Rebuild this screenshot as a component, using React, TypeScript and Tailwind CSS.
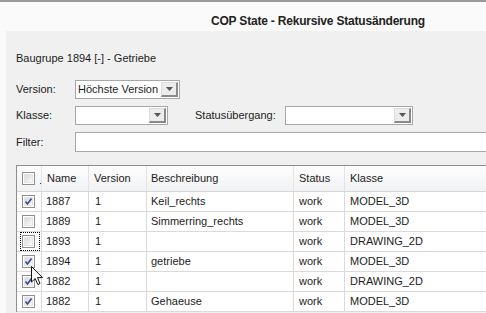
import React from 'react';

const rows = [
  { checked: true, name: '1887', version: '1', desc: 'Keil_rechts', status: 'work', klasse: 'MODEL_3D' },
  { checked: false, name: '1889', version: '1', desc: 'Simmerring_rechts', status: 'work', klasse: 'MODEL_3D' },
  { checked: false, name: '1893', version: '1', desc: '', status: 'work', klasse: 'DRAWING_2D', focus: true },
  { checked: true, name: '1894', version: '1', desc: 'getriebe', status: 'work', klasse: 'MODEL_3D' },
  { checked: true, name: '1882', version: '1', desc: '', status: 'work', klasse: 'DRAWING_2D' },
  { checked: true, name: '1882', version: '1', desc: 'Gehaeuse', status: 'work', klasse: 'MODEL_3D' },
];

function Checkbox({ checked }: { checked: boolean }) {
  return (
    <div className="relative w-[13px] h-[13px] border border-[#8f8f8f] bg-white p-[1px]">
      <div className="w-full h-full bg-gradient-to-br from-[#d8d8d8] to-[#fbfbfb] border border-[#e6e6e6]" />
      {checked && (
        <svg className="absolute left-0 top-0" width="11" height="11" viewBox="0 0 11 11">
          <path d="M2.5 5.5 L4.5 8 L8.5 2.5" fill="none" stroke="#2d4a9e" strokeWidth="1.6" />
        </svg>
      )}
    </div>
  );
}

function DropButton() {
  return (
    <div className="w-[17px] h-full flex items-center justify-center bg-[#ececec] border-l border-t border-l-[#dcdcdc] border-t-[#dcdcdc] border-r-2 border-b-2 border-r-[#8a8a8a] border-b-[#8a8a8a]">
      <svg width="7" height="4" viewBox="0 0 7 4">
        <path d="M0 0 H7 L3.5 4 Z" fill="#555" />
      </svg>
    </div>
  );
}

function Select({ width, value }: { width: string; value?: string }) {
  return (
    <div className={`flex shrink-0 h-full bg-white border border-[#a8a8a8] p-[1px] ${width}`}>
      <div className="flex-1 flex items-center pl-[1px] leading-none">{value}</div>
      <DropButton />
    </div>
  );
}

export default function App() {
  return (
    <div className="relative w-[486px] h-[313px] overflow-hidden bg-[#fafafa] text-[11px] text-[#1c1c1c] font-['Liberation_Sans',Arial,sans-serif]">
      <div className="h-[2px] bg-[#9a9a9a]" />
      {/* Title bar */}
      <div className="h-[29px] pl-[211px] pt-[11px]">
        <span className="text-[12px] leading-[14px] font-bold tracking-[-0.2px] text-[#222]">COP State - Rekursive Statusänderung</span>
      </div>

      <div className="flex h-[282px]">
        <div className="w-[6px] shrink-0" />
        <div className="flex-1 min-w-0 bg-[#f0f0f0] pl-[10px] pt-[21px]">
          <div className="leading-[13px]">Baugrupe 1894 [-] - Getriebe</div>

          <div className="mt-[15px] flex flex-col gap-[7px]">
            <div className="flex items-center h-[19px]">
              <div className="w-[59px] shrink-0">Version:</div>
              <Select width="w-[105px]" value="Höchste Version" />
            </div>
            <div className="flex items-center h-[19px]">
              <div className="w-[59px] shrink-0">Klasse:</div>
              <Select width="w-[93px]" />
              <div className="ml-[27px] w-[90px] shrink-0">Statusübergang:</div>
              <Select width="w-[128px]" />
            </div>
            <div className="flex items-center h-[20px]">
              <div className="w-[59px] shrink-0">Filter:</div>
              <div className="h-full w-[420px] shrink-0 bg-white border border-[#a8a8a8]" />
            </div>
          </div>

          {/* Table */}
          <div className="mt-[13px] w-[600px] bg-white border-l border-t border-[#8e8f8f]">
            <div className="grid grid-cols-[25px_47px_58px_147px_51px_272px] h-[26px] border-b border-[#d5d5d5] bg-gradient-to-b from-[#fdfdfd] to-[#f1f2f4]">
              <div className="relative flex items-center pl-[5px] border-r border-[#e2e3e5]">
                <Checkbox checked={false} />
                <div className="absolute right-[0px] top-[17px] w-[1px] h-[1px] bg-[#333]" />
              </div>
              <div className="flex items-center pl-[5px] border-r border-[#e2e3e5]">Name</div>
              <div className="flex items-center pl-[5px] border-r border-[#e2e3e5]">Version</div>
              <div className="flex items-center pl-[4px] border-r border-[#e2e3e5]">Beschreibung</div>
              <div className="flex items-center pl-[5px] border-r border-[#e2e3e5]">Status</div>
              <div className="flex items-center pl-[5px]">Klasse</div>
            </div>
            {rows.map((r, i) => (
              <div key={i} className="grid grid-cols-[25px_47px_58px_147px_51px_272px] h-[20px] border-b border-[#dadada]">
                <div className="relative flex items-center pl-[5px] border-r border-[#dadada]">
                  <Checkbox checked={r.checked} />
                  {r.focus && <div className="absolute left-[3px] right-[1px] top-0 bottom-0 border border-dotted border-black" />}
                </div>
                <div className="flex items-center pl-[4px] border-r border-[#dadada]">{r.name}</div>
                <div className="flex items-center pl-[6px] border-r border-[#dadada]">{r.version}</div>
                <div className="flex items-center pl-[4px] border-r border-[#dadada]">{r.desc}</div>
                <div className="flex items-center pl-[5px] border-r border-[#dadada]">{r.status}</div>
                <div className="flex items-center pl-[5px]">{r.klasse}</div>
              </div>
            ))}
          </div>
        </div>
      </div>

      {/* mouse cursor */}
      <svg className="absolute left-[31px] top-[266px]" width="13" height="21" viewBox="0 0 13 21">
        <path d="M0.5 0.5 L0.5 16 L4.2 12.5 L6.8 18.5 L9 17.5 L6.5 11.6 L11.5 11.6 Z" fill="#fff" stroke="#111" strokeWidth="1" />
      </svg>
    </div>
  );
}
